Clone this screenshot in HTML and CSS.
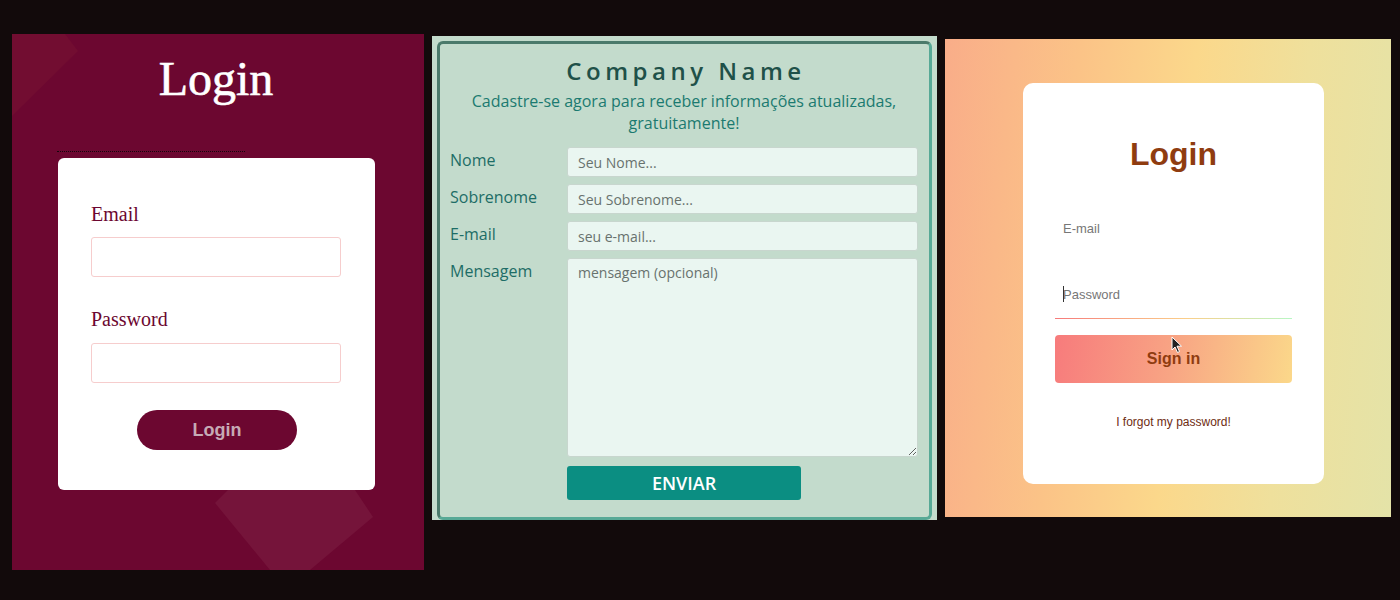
FILE: index.html
```html
<!DOCTYPE html>
<html lang="pt">
<head>
<meta charset="utf-8">
<title>Forms</title>
<link rel="stylesheet" href="styles.css">
</head>
<body>
<div class="stage">

  <section class="wine">
    <svg class="wine-deco" width="412" height="536" viewBox="0 0 412 536" aria-hidden="true">
      <polygon points="0,0 53,0 66,17 0,82" fill="#720d31"/>
      <polygon points="216,456 343,456 361,483 298,536 258,536 203,469" fill="#75143a"/>
    </svg>
    <h1 class="wine-title">Login</h1>
    <div class="wine-dots"></div>
    <form class="wine-card">
      <label class="wine-label">Email</label>
      <input class="wine-input" type="text">
      <label class="wine-label wine-label-pw">Password</label>
      <input class="wine-input" type="password">
      <button class="wine-btn" type="button">Login</button>
    </form>
  </section>

  <section class="mint">
    <div class="mint-box">
      <h2 class="mint-title">Company Name</h2>
      <p class="mint-sub">Cadastre-se agora para receber informações atualizadas, gratuitamente!</p>
      <div class="mint-row mint-row-first">
        <label class="mint-label">Nome</label>
        <input class="mint-input" type="text" placeholder="Seu Nome...">
      </div>
      <div class="mint-row">
        <label class="mint-label">Sobrenome</label>
        <input class="mint-input" type="text" placeholder="Seu Sobrenome...">
      </div>
      <div class="mint-row">
        <label class="mint-label">E-mail</label>
        <input class="mint-input" type="text" placeholder="seu e-mail...">
      </div>
      <div class="mint-row">
        <label class="mint-label">Mensagem</label>
        <textarea class="mint-input mint-area" placeholder="mensagem (opcional)"></textarea>
      </div>
      <div class="mint-row mint-row-btn">
        <span class="mint-label"></span>
        <button class="mint-btn" type="button">ENVIAR</button>
      </div>
    </div>
  </section>

  <section class="peach">
    <div class="peach-card">
      <h2 class="peach-title">Login</h2>
      <input class="peach-input peach-input-mail" type="text" placeholder="E-mail">
      <div class="peach-pw">
        <input class="peach-input peach-input-pw" type="password" placeholder="Password">
        <span class="peach-caret"></span>
      </div>
      <button class="peach-btn" type="button">Sign in</button>
      <a class="peach-forgot">I forgot my password!</a>
      <svg class="cursor" width="12" height="18" viewBox="0 0 12 18" aria-hidden="true">
        <path d="M1 1 L1 14 L4 11 L6.5 16.5 L8.5 15.5 L6 10.2 L10.5 10.2 Z" fill="#222" stroke="#fff" stroke-width="1"/>
      </svg>
    </div>
  </section>

</div>
</body>
</html>
```
FILE: styles.css
```css
html, body {
  margin: 0;
  padding: 0;
}
body {
  background: #120a0b;
  width: 1400px;
  height: 600px;
  overflow: hidden;
}
.stage {
  display: flex;
  align-items: flex-start;
  padding-left: 12px;
}

/* ---------- left: wine login ---------- */
.wine {
  position: relative;
  width: 412px;
  height: 536px;
  margin-top: 34px;
  background: #6c0730;
  overflow: hidden;
  display: flex;
  flex-direction: column;
}
.wine-deco {
  position: absolute;
  left: 0;
  top: 0;
}
.wine-title {
  position: relative;
  margin: 17px 0 0 -4px;
  font-family: "Liberation Serif", "Times New Roman", serif;
  font-weight: 400;
  font-size: 48px;
  line-height: 55px;
  color: #ffffff;
  text-align: center;
  -webkit-text-stroke: 0.6px #ffffff;
}
.wine-dots {
  position: relative;
  width: 188px;
  margin: 45px 0 0 45px;
  border-top: 1px dotted #14060b;
}
.wine-card {
  position: relative;
  box-sizing: border-box;
  width: 317px;
  height: 332px;
  margin: 6px 0 0 46px;
  padding: 44px 33px 0;
  background: #ffffff;
  border-radius: 6px;
  display: flex;
  flex-direction: column;
}
.wine-label {
  font-family: "Liberation Serif", "Times New Roman", serif;
  font-size: 20px;
  line-height: 24px;
  color: #6c0730;
}
.wine-label-pw {
  margin-top: 30px;
}
.wine-input {
  box-sizing: border-box;
  width: 250px;
  height: 40px;
  margin-top: 11px;
  border: 1px solid #f6cdcd;
  border-radius: 3px;
  background: #fff;
}
.wine-label-pw + .wine-input {
  margin-top: 12px;
}
.wine-btn {
  align-self: flex-start;
  width: 160px;
  height: 40px;
  margin: 27px 0 0 46px;
  border: none;
  border-radius: 20px;
  background: #6c0730;
  color: #c6aab5;
  font-family: "Liberation Sans", Arial, sans-serif;
  font-weight: 700;
  font-size: 18px;
}

/* ---------- middle: mint form ---------- */
.mint {
  box-sizing: border-box;
  width: 505px;
  height: 484px;
  margin: 36px 0 0 8px;
  padding: 5px 5px 0;
  background: #c3dbcc;
}
.mint-box {
  box-sizing: border-box;
  height: 479px;
  border: 3px solid;
  border-color: #4b7a6b #57a996 #57a996 #4b7a6b;
  border-radius: 6px;
  padding: 0 11px 0 10px;
  display: flex;
  flex-direction: column;
  font-family: "Open Sans", "Noto Sans", sans-serif;
}
.mint-title {
  margin: 10px 0 0;
  padding-left: 4px;
  font-size: 24px;
  font-weight: 600;
  letter-spacing: 4.5px;
  line-height: 33px;
  color: #1f5149;
  text-align: center;
}
.mint-sub {
  margin: 3px 0 0;
  padding: 0 20px;
  font-size: 16px;
  line-height: 22px;
  color: #1b7a70;
  text-align: center;
}
.mint-row {
  display: flex;
  margin-top: 7px;
}
.mint-row-first {
  margin-top: 13px;
}
.mint-row-btn {
  margin-top: 9px;
}
.mint-label {
  flex: 0 0 117px;
  font-size: 16px;
  line-height: 22px;
  padding-top: 2px;
  color: #1d6d66;
}
.mint-input {
  box-sizing: border-box;
  width: 352px;
  height: 30px;
  padding: 0 10px;
  border: 1px solid #c8d6ce;
  border-radius: 3px;
  background: #eaf6f1;
  font-family: "Open Sans", "Noto Sans", sans-serif;
  font-size: 14px;
  color: #333;
}
.mint-input::placeholder {
  color: #68726e;
  opacity: 1;
}
.mint-area {
  height: 199px;
  padding: 4px 10px;
  resize: vertical;
  line-height: 20px;
}
.mint-btn {
  width: 234px;
  height: 34px;
  border: none;
  border-radius: 3px;
  background: #0b8e82;
  color: #ffffff;
  font-family: "Open Sans", "Noto Sans", sans-serif;
  font-weight: 600;
  font-size: 18px;
  line-height: 34px;
  padding: 0;
}

/* ---------- right: peach login ---------- */
.peach {
  width: 446px;
  height: 478px;
  margin: 39px 0 0 8px;
  background: linear-gradient(95deg, #f9ad89 0%, #fbc387 28%, #fbd88b 52%, #efe09c 75%, #e4e3a8 100%);
}
.peach-card {
  position: relative;
  box-sizing: border-box;
  width: 301px;
  height: 401px;
  margin: 44px 0 0 78px;
  padding: 53px 32px 0;
  background: #ffffff;
  border-radius: 10px;
  display: flex;
  flex-direction: column;
  font-family: "Liberation Sans", Arial, sans-serif;
}
.peach-title {
  margin: 0;
  font-size: 32px;
  line-height: 37px;
  font-weight: 700;
  color: #8f3c10;
  text-align: center;
}
.peach-input {
  box-sizing: border-box;
  width: 237px;
  height: 46px;
  padding: 0 8px;
  border: none;
  background: transparent;
  font-family: "Liberation Sans", Arial, sans-serif;
  font-size: 13px;
  color: #333;
}
.peach-input-mail {
  margin-top: 32px;
}
.peach-input::placeholder {
  color: #777;
  opacity: 1;
}
.peach-pw {
  position: relative;
  margin-top: 19px;
}
.peach-input-pw {
  display: block;
  height: 49px;
  background: linear-gradient(to right, #f67a7a, #fbce89 55%, #b8f7c4) no-repeat left bottom / 100% 1px;
}
.peach-caret {
  position: absolute;
  left: 8px;
  top: 16px;
  width: 1px;
  height: 16px;
  background: #333;
}
.peach-btn {
  width: 237px;
  height: 48px;
  margin-top: 16px;
  border: none;
  border-radius: 4px;
  background: linear-gradient(100deg, #f77b7c 0%, #f8a584 50%, #fbd88a 100%);
  color: #8f3c10;
  font-family: "Liberation Sans", Arial, sans-serif;
  font-weight: 700;
  font-size: 16px;
}
.peach-forgot {
  margin-top: 32px;
  font-size: 12px;
  line-height: 14px;
  color: #6e2c12;
  text-align: center;
}
.cursor {
  position: absolute;
  left: 148px;
  top: 253px;
}
```
